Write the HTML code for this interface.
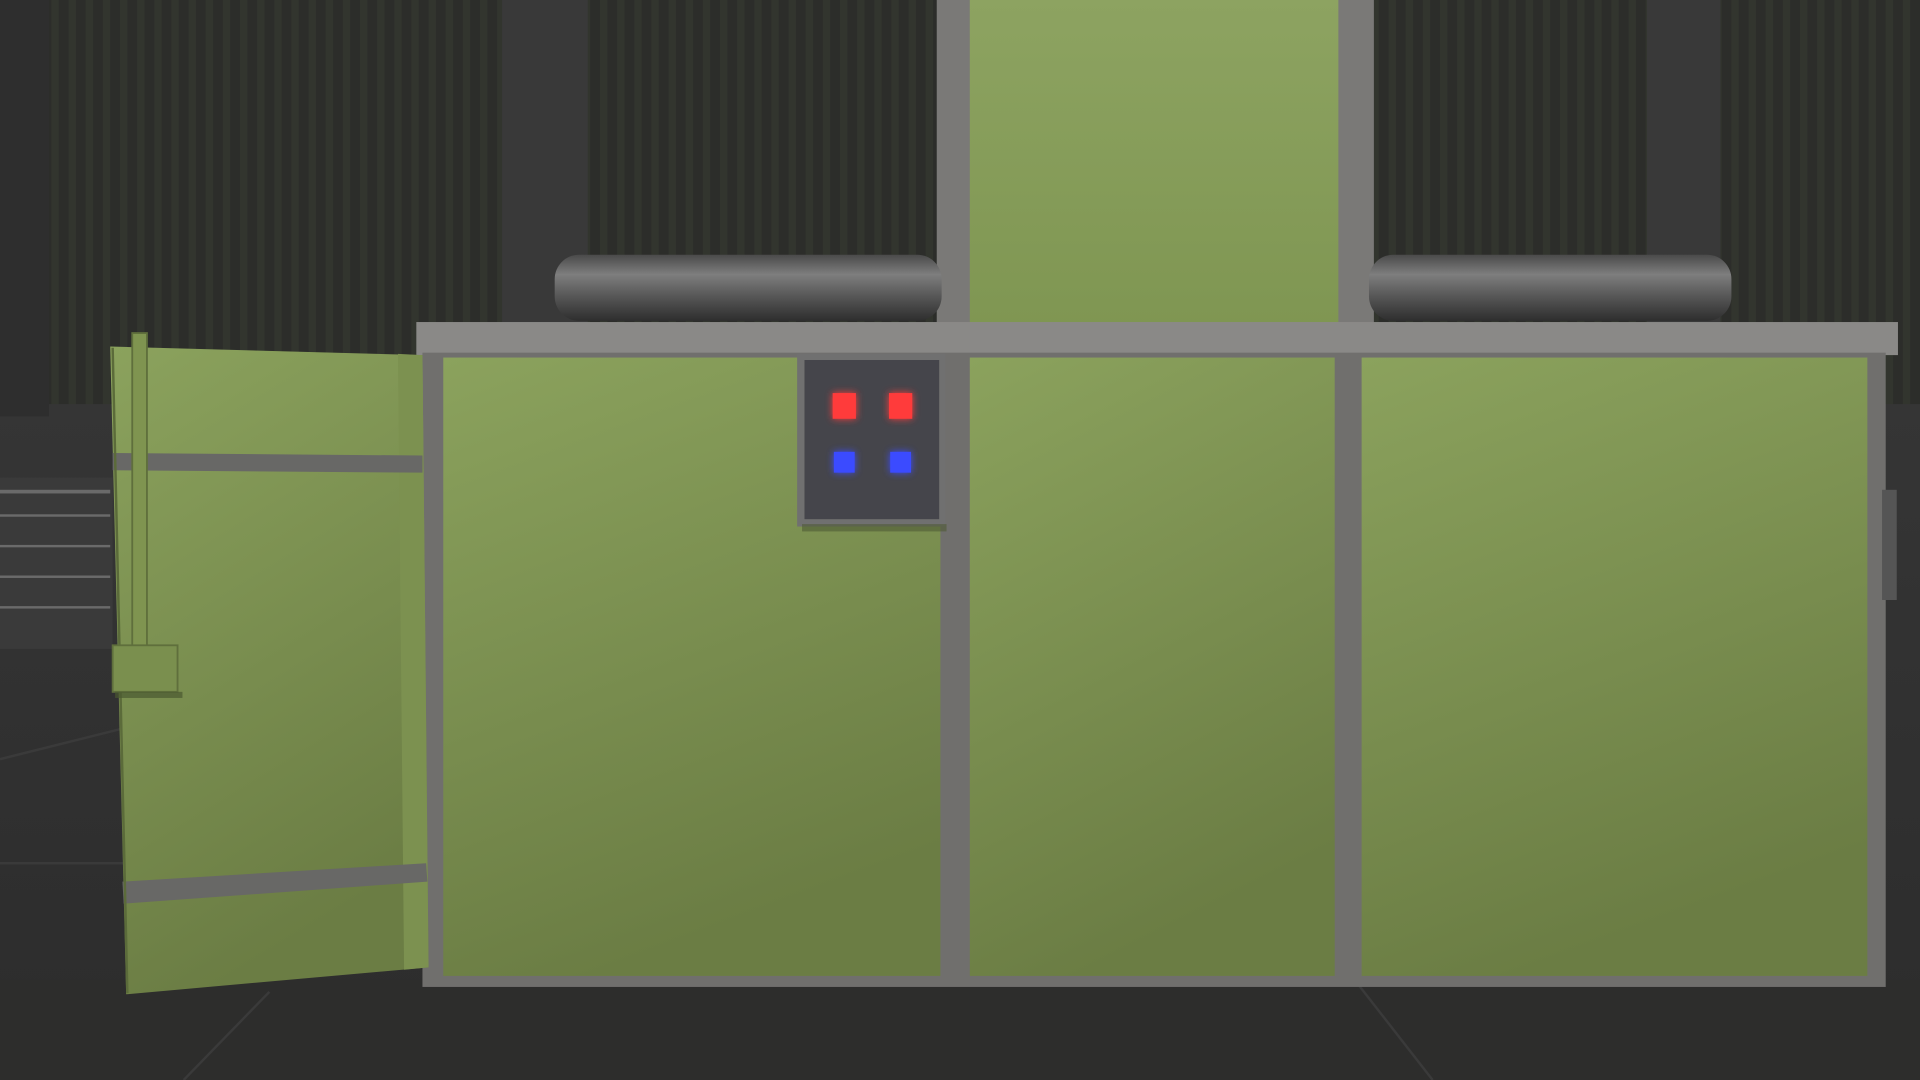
<!DOCTYPE html>
<html><head><meta charset="utf-8"><style>
html,body{margin:0;padding:0;background:#2a2a2a;overflow:hidden}
svg{display:block}
</style></head><body>
<svg width="1920" height="1080" viewBox="0 0 1568 882" preserveAspectRatio="none" xmlns="http://www.w3.org/2000/svg">
<defs>
<pattern id="stripes" width="14" height="10" patternUnits="userSpaceOnUse">
<rect width="14" height="10" fill="#2c2d2a"/><rect width="6" height="10" fill="#32352e"/>
</pattern>
<linearGradient id="green" x1="0" y1="0" x2="0.3" y2="1">
<stop offset="0" stop-color="#8ba25d"/><stop offset="1" stop-color="#6b7d44"/>
</linearGradient>
<linearGradient id="greenTop" x1="0" y1="0" x2="0" y2="1">
<stop offset="0" stop-color="#8da361"/><stop offset="1" stop-color="#7f9652"/>
</linearGradient>
<linearGradient id="pipe" x1="0" y1="0" x2="0" y2="1">
<stop offset="0" stop-color="#4a4a4a"/><stop offset="0.3" stop-color="#7e7e7e"/><stop offset="0.6" stop-color="#5a5a5a"/><stop offset="1" stop-color="#2e2e2e"/>
</linearGradient>
<linearGradient id="floor" x1="0" y1="0" x2="0" y2="1">
<stop offset="0" stop-color="#353535"/><stop offset="1" stop-color="#2c2c2c"/>
</linearGradient>
<filter id="glow" x="-1" y="-1" width="3" height="3"><feGaussianBlur stdDeviation="3" result="b"/><feMerge><feMergeNode in="b"/><feMergeNode in="SourceGraphic"/></feMerge></filter>
</defs>
<rect width="1568" height="882" fill="#2a2a2a"/>
<rect x="0" y="0" width="1568" height="340" fill="url(#stripes)"/>
<rect x="0" y="330" width="1568" height="552" fill="url(#floor)"/>
<rect x="0" y="800" width="1568" height="82" fill="#2d2d2c"/>
<g stroke="#3a3a3a" stroke-width="2"><line x1="0" y1="705" x2="345" y2="705"/><line x1="0" y1="620" x2="100" y2="595"/><line x1="220" y1="810" x2="150" y2="882"/><line x1="1110" y1="805" x2="1170" y2="882"/></g>
<rect x="0" y="0" width="40" height="340" fill="#2e2e2e"/>
<rect x="0" y="390" width="92" height="140" fill="#3a3a3a"/>
<g fill="#6a6a6a"><rect x="0" y="400" width="90" height="3"/><rect x="0" y="420" width="90" height="2"/><rect x="0" y="445" width="90" height="2"/><rect x="0" y="470" width="90" height="2"/><rect x="0" y="495" width="90" height="2"/></g>
<rect x="410" y="0" width="70" height="266" fill="#393939"/>
<rect x="1345" y="0" width="60" height="266" fill="#393939"/>
<rect x="765" y="0" width="357" height="270" fill="#7a7977"/>
<rect x="792" y="0" width="301" height="268" fill="url(#greenTop)"/>
<rect x="453" y="208" width="316" height="54" rx="20" fill="url(#pipe)"/>
<rect x="1118" y="208" width="296" height="54" rx="20" fill="url(#pipe)"/>
<rect x="340" y="263" width="1210" height="27" fill="#8a8987"/>
<rect x="345" y="288" width="1195" height="518" fill="#706f6d"/>
<rect x="362" y="292" width="406" height="505" fill="url(#green)"/>
<rect x="792" y="292" width="298" height="505" fill="url(#green)"/>
<rect x="1112" y="292" width="413" height="505" fill="url(#green)"/>
<rect x="651" y="289" width="121" height="141" fill="#707070"/>
<rect x="657" y="294" width="110" height="130" fill="#45454b"/>
<rect x="655" y="428" width="118" height="6" fill="#4e5a36" opacity="0.6"/>
<g filter="url(#glow)">
<rect x="680" y="321" width="19" height="21" fill="#ff3b3b"/>
<rect x="726" y="321" width="19" height="21" fill="#ff3b3b"/>
<rect x="681" y="369" width="17" height="17" fill="#3b4cff"/>
<rect x="727" y="369" width="17" height="17" fill="#3b4cff"/>
</g>
<rect x="1537" y="400" width="12" height="90" fill="#555"/>
<polygon points="90,283 345,290 350,790 103,812" fill="url(#green)"/>
<polygon points="325,289 345,290 350,790 330,792" fill="#7c9150"/>
<polygon points="92,370 345,372 345,386 92,384" fill="#686866"/>
<polygon points="100,720 348,705 349,720 101,738" fill="#686866"/>
<line x1="92" y1="284" x2="104" y2="811" stroke="#5b6b3a" stroke-width="2"/>
<rect x="108" y="272" width="12" height="258" fill="#7f9450" stroke="#5f6f3c" stroke-width="1.5"/>
<rect x="92" y="527" width="53" height="38" fill="#7a8f4e" stroke="#5f6f3c" stroke-width="1.5"/>
<rect x="94" y="565" width="55" height="5" fill="#4a5830" opacity="0.7"/>
</svg>
</body></html>
